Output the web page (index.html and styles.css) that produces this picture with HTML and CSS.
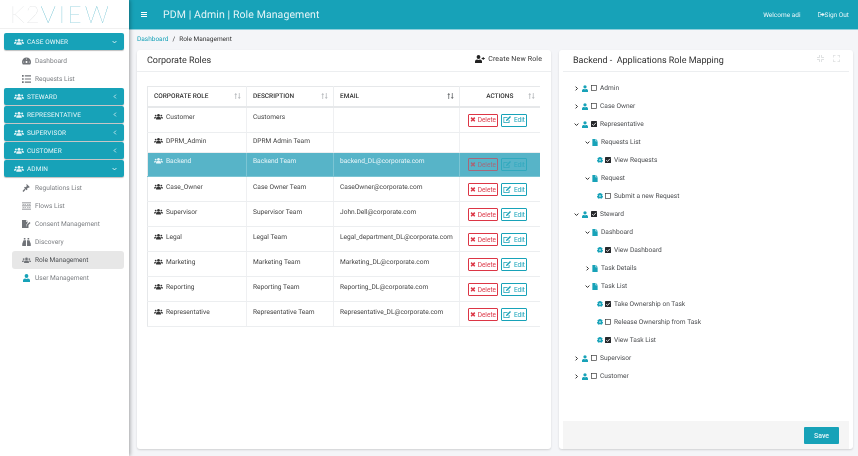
FILE: index.html
```html
<!DOCTYPE html>
<html lang="en">
<head>
    <meta charset="UTF-8">
    <meta name="viewport" content="width=device-width, initial-scale=1.0">
    <title>Role Management</title>
    <link rel="stylesheet" href="styles.css">
</head>
<body>
    <svg class="sprites" width="0" height="0">
        <symbol id="i-users" viewBox="0 0 24 16"><circle cx="12" cy="5" r="3.6"/><circle cx="4.5" cy="5.5" r="2.4"/><circle cx="19.5" cy="5.5" r="2.4"/><path d="M5.5 16v-2.5C5.500 10.500 8 9.500 12 9.500s6.500 1 6.500 4V16zM0 12.500C0 10 1.500 9 4 9c1 0 1.600.2 2.200.6C4.500 10.500 4 12 4 13.500H0zM24 12.500C24 10 22.500 9 20 9c-1 0-1.600.2-2.200.6 1.700.9 2.200 2.400 2.200 3.900h4z"/></symbol>
        <symbol id="i-user" viewBox="0 0 14 16"><circle cx="7" cy="4" r="3.800"/><path d="M0 16v-3c0-2.500 2-4 4-4 1 .6 2 .9 3 .9s2-.3 3-.9c2 0 4 1.500 4 4v3z"/></symbol>
        <symbol id="i-user-plus" viewBox="0 0 20 16"><circle cx="7" cy="4" r="3.800"/><path d="M0 16v-3c0-2.500 2-4 4-4 1 .6 2 .9 3 .9s2-.3 3-.9c2 0 4 1.500 4 4v3zM15.500 4h1.800v2.200h2.200V8h-2.200v2.200h-1.800V8h-2.200V6.200h2.200z"/></symbol>
        <symbol id="i-file" viewBox="0 0 12 16"><path d="M0 0h7v5h5v11H0zM8 0l4 4H8z"/></symbol>
        <symbol id="i-cog" viewBox="0 0 16 16"><path fill-rule="evenodd" d="M6 0h4l.5 2.200 2-1 2.600 3-1.500 1.700.6 2.100 1.800.5v3l-2 .6-.4 1.900-2.600 1.500-1.600-1.200H6.600L5 15.500 2.400 14l-.4-1.900-2-.6v-3l1.800-.5.6-2.100L.9 4.200l2.600-3 2 1zM8 5.800a2.200 2.200 0 1 0 0 4.400 2.200 2.200 0 0 0 0-4.400z"/></symbol>
        <symbol id="i-dash" viewBox="0 0 18 14"><path fill-rule="evenodd" d="M9 0a9 9 0 0 1 9 9c0 2-.6 3.700-1.600 5H1.600A9 9 0 0 1 0 9a9 9 0 0 1 9-9zM9 7a2 2 0 1 0 0 4 2 2 0 0 0 0-4zM3.500 8a1 1 0 1 0 0 2 1 1 0 0 0 0-2zM14.500 8a1 1 0 1 0 0 2 1 1 0 0 0 0-2zM9 2a1 1 0 1 0 0 2 1 1 0 0 0 0-2z"/></symbol>
        <symbol id="i-list" viewBox="0 0 16 14"><path d="M0 0h3v3H0zM0 5.500h3v3H0zM0 11h3v3H0zM5 .5h11v2H5zM5 6h11v2H5zM5 11.500h11v2H5z"/></symbol>
        <symbol id="i-gavel" viewBox="0 0 16 16"><path d="M8.500 0l6 6-2 2-1-1-2.500 2.500 1 1-2 2-5-5 2-2 1 1L9 4 7.500 2zM4 9.500l2 2L2 16l-2-2z"/></symbol>
        <symbol id="i-flows" viewBox="0 0 18 14"><path d="M0 0h18v1.500H0zM0 12.500h18V14H0zM1 3.500h3v1H1zM5 3.500h3v1H5zM10 3.500h3v1h-3zM14 3.500h3v1h-3zM0 6.200h18v1.200H0zM1 9.500h3v1H1zM5 9.500h3v1H5zM10 9.500h3v1h-3zM14 9.500h3v1h-3z"/></symbol>
        <symbol id="i-consent" viewBox="0 0 18 16"><path d="M0 0h8v4h3v2l-3 4v3l3-1 2-2v6H0zM9 0l3 3H9zM15 4l2 2-6 6-2.500.5L9 10z"/></symbol>
        <symbol id="i-binoculars" viewBox="0 0 16 15"><path d="M3 0h3v3H3zM10 0h3v3h-3zM2.500 4H7v11H0v-4zM9 4h4.500L16 11v4H9z"/></symbol>
        <symbol id="i-edit" viewBox="0 0 16 14"><path d="M1 2h8v1.400H2.400v9.200h9V8H13v6H1z"/><path d="M14 0l2 2-7.500 7.500L6 10l.5-2.500z"/></symbol>
        <symbol id="i-signout" viewBox="0 0 16 12"><path d="M6 0v1.500H1.500v9H6V12H0V0zM10 1.500L16 6l-6 4.500V8H5V4h5z"/></symbol>
        <symbol id="i-sort" viewBox="0 0 12 10"><path d="M3 0l2.500 3H3.700v7H2.300V3H.5zM9 10L6.500 7h1.800V0h1.400v7h1.800z"/></symbol>
        <symbol id="i-check" viewBox="0 0 10 10"><rect width="10" height="10" rx="1"/><path d="M2 5.200l2.200 2.200L8.200 3" fill="none" stroke="#fff" stroke-width="1.400"/></symbol>
        <symbol id="i-box" viewBox="0 0 10 10"><rect x=".6" y=".6" width="8.800" height="8.800" fill="#fff" stroke="#333" stroke-width="1.100"/></symbol>
        <symbol id="i-right" viewBox="0 0 6 8"><path d="M1.500 1l3 3-3 3" fill="none" stroke="currentColor" stroke-width="1.500"/></symbol>
        <symbol id="i-left" viewBox="0 0 6 8"><path d="M4.500 1l-3 3 3 3" fill="none" stroke="currentColor" stroke-width="1.300"/></symbol>
        <symbol id="i-down" viewBox="0 0 8 6"><path d="M1 1.500l3 3 3-3" fill="none" stroke="currentColor" stroke-width="1.500"/></symbol>
        <symbol id="i-compress" viewBox="0 0 14 14"><path d="M5 0v5H0M9 0v5h5M5 14V9H0M9 14V9h5" fill="none" stroke="currentColor" stroke-width="1.200"/></symbol>
        <symbol id="i-expand" viewBox="0 0 14 14"><path d="M.6 5V.6H5M9 .6h4.400V5M.6 9v4.400H5M9 13.400h4.400V9" fill="none" stroke="currentColor" stroke-width="1.200"/></symbol>
    </svg>

    <div class="app">
        <aside class="sidebar">
            <div class="logo"><span class="logo-k2">K2</span><span class="logo-view">VIEW</span></div>
            <nav class="menu">
                <a class="menu-head"><svg class="mi-users"><use href="#i-users"/></svg>CASE OWNER<svg class="mi-down"><use href="#i-down"/></svg></a>
                <ul class="sub">
                    <li><svg class="sub-icon"><use href="#i-dash"/></svg>Dashboard</li>
                    <li><svg class="sub-icon"><use href="#i-list"/></svg>Requests List</li>
                </ul>
                <a class="menu-head"><svg class="mi-users"><use href="#i-users"/></svg>STEWARD<svg class="mi-left"><use href="#i-left"/></svg></a>
                <a class="menu-head"><svg class="mi-users"><use href="#i-users"/></svg>REPRESENTATIVE<svg class="mi-left"><use href="#i-left"/></svg></a>
                <a class="menu-head"><svg class="mi-users"><use href="#i-users"/></svg>SUPERVISOR<svg class="mi-left"><use href="#i-left"/></svg></a>
                <a class="menu-head"><svg class="mi-users"><use href="#i-users"/></svg>CUSTOMER<svg class="mi-left"><use href="#i-left"/></svg></a>
                <a class="menu-head"><svg class="mi-users"><use href="#i-users"/></svg>ADMIN<svg class="mi-down"><use href="#i-down"/></svg></a>
                <ul class="sub">
                    <li><svg class="sub-icon"><use href="#i-gavel"/></svg>Regulations List</li>
                    <li><svg class="sub-icon"><use href="#i-flows"/></svg>Flows List</li>
                    <li><svg class="sub-icon"><use href="#i-consent"/></svg>Consent Management</li>
                    <li><svg class="sub-icon"><use href="#i-binoculars"/></svg>Discovery</li>
                    <li class="active"><svg class="sub-icon"><use href="#i-users"/></svg>Role Management</li>
                    <li><svg class="sub-icon teal"><use href="#i-user"/></svg>User Management</li>
                </ul>
            </nav>
        </aside>

        <div class="content">
            <header class="topbar">
                <span class="burger"><i></i><i></i><i></i></span>
                <span class="page-title">PDM | Admin | Role Management</span>
                <span class="welcome">Welcome adi</span>
                <span class="signout"><svg><use href="#i-signout"/></svg>Sign Out</span>
            </header>

            <div class="breadcrumb"><a>Dashboard</a><span class="sep">/</span>Role Management</div>

            <main class="panels">
                <section class="card roles">
                    <div class="card-head">
                        <h2>Corporate Roles</h2>
                        <span class="create"><svg><use href="#i-user-plus"/></svg>Create New Role</span>
                    </div>
                    <table class="grid">
                        <colgroup><col class="c1"><col class="c2"><col class="c3"><col class="c4"></colgroup>
                        <thead>
                            <tr>
                                <th>CORPORATE ROLE<svg class="sort"><use href="#i-sort"/></svg></th>
                                <th>DESCRIPTION<svg class="sort"><use href="#i-sort"/></svg></th>
                                <th>EMAIL<svg class="sort dark"><use href="#i-sort"/></svg></th>
                                <th class="center">ACTIONS<svg class="sort"><use href="#i-sort"/></svg></th>
                            </tr>
                        </thead>
                        <tbody>
                            <tr class="r26">
                                <td><svg class="role-icon"><use href="#i-users"/></svg>Customer</td>
                                <td>Customers</td>
                                <td></td>
                                <td class="acts"><button class="btn-del">✖ Delete</button><button class="btn-edit"><svg><use href="#i-edit"/></svg>Edit</button></td>
                            </tr>
                            <tr class="r20">
                                <td><svg class="role-icon"><use href="#i-users"/></svg>DPRM_Admin</td>
                                <td>DPRM Admin Team</td>
                                <td></td>
                                <td></td>
                            </tr>
                            <tr class="r24 selected">
                                <td><svg class="role-icon"><use href="#i-users"/></svg>Backend</td>
                                <td>Backend Team</td>
                                <td>backend_DL@corporate.com</td>
                                <td class="acts"><button class="btn-del">✖ Delete</button><button class="btn-edit"><svg><use href="#i-edit"/></svg>Edit</button></td>
                            </tr>
                            <tr>
                                <td><svg class="role-icon"><use href="#i-users"/></svg>Case_Owner</td>
                                <td>Case Owner Team</td>
                                <td>CaseOwner@corporate.com</td>
                                <td class="acts"><button class="btn-del">✖ Delete</button><button class="btn-edit"><svg><use href="#i-edit"/></svg>Edit</button></td>
                            </tr>
                            <tr>
                                <td><svg class="role-icon"><use href="#i-users"/></svg>Supervisor</td>
                                <td>Supervisor Team</td>
                                <td>John.Dell@corporate.com</td>
                                <td class="acts"><button class="btn-del">✖ Delete</button><button class="btn-edit"><svg><use href="#i-edit"/></svg>Edit</button></td>
                            </tr>
                            <tr>
                                <td><svg class="role-icon"><use href="#i-users"/></svg>Legal</td>
                                <td>Legal Team</td>
                                <td>Legal_department_DL@corporate.com</td>
                                <td class="acts"><button class="btn-del">✖ Delete</button><button class="btn-edit"><svg><use href="#i-edit"/></svg>Edit</button></td>
                            </tr>
                            <tr>
                                <td><svg class="role-icon"><use href="#i-users"/></svg>Marketing</td>
                                <td>Marketing Team</td>
                                <td>Marketing_DL@corporate.com</td>
                                <td class="acts"><button class="btn-del">✖ Delete</button><button class="btn-edit"><svg><use href="#i-edit"/></svg>Edit</button></td>
                            </tr>
                            <tr>
                                <td><svg class="role-icon"><use href="#i-users"/></svg>Reporting</td>
                                <td>Reporting Team</td>
                                <td>Reporting_DL@corporate.com</td>
                                <td class="acts"><button class="btn-del">✖ Delete</button><button class="btn-edit"><svg><use href="#i-edit"/></svg>Edit</button></td>
                            </tr>
                            <tr>
                                <td><svg class="role-icon"><use href="#i-users"/></svg>Representative</td>
                                <td>Representative Team</td>
                                <td>Representative_DL@corporate.com</td>
                                <td class="acts"><button class="btn-del">✖ Delete</button><button class="btn-edit"><svg><use href="#i-edit"/></svg>Edit</button></td>
                            </tr>
                        </tbody>
                    </table>
                </section>

                <section class="card mapping">
                    <div class="card-head map-head">
                        <h2>Backend -&nbsp; Applications Role Mapping</h2>
                        <span class="tools"><svg><use href="#i-compress"/></svg><svg><use href="#i-expand"/></svg></span>
                    </div>
                    <ul class="tree">
                        <li class="l1"><svg class="tw"><use href="#i-right"/></svg><svg class="ti"><use href="#i-user"/></svg><svg class="cb"><use href="#i-box"/></svg>Admin</li>
                        <li class="l1"><svg class="tw"><use href="#i-right"/></svg><svg class="ti"><use href="#i-user"/></svg><svg class="cb"><use href="#i-box"/></svg>Case Owner</li>
                        <li class="l1"><svg class="tw"><use href="#i-down"/></svg><svg class="ti"><use href="#i-user"/></svg><svg class="cb"><use href="#i-check"/></svg>Representative</li>
                        <li class="l2"><svg class="tw"><use href="#i-down"/></svg><svg class="tf"><use href="#i-file"/></svg>Requests List</li>
                        <li class="l3"><svg class="tc"><use href="#i-cog"/></svg><svg class="cb"><use href="#i-check"/></svg>View Requests</li>
                        <li class="l2"><svg class="tw"><use href="#i-down"/></svg><svg class="tf"><use href="#i-file"/></svg>Request</li>
                        <li class="l3"><svg class="tc"><use href="#i-cog"/></svg><svg class="cb"><use href="#i-box"/></svg>Submit a new Request</li>
                        <li class="l1"><svg class="tw"><use href="#i-down"/></svg><svg class="ti"><use href="#i-user"/></svg><svg class="cb"><use href="#i-check"/></svg>Steward</li>
                        <li class="l2"><svg class="tw"><use href="#i-down"/></svg><svg class="tf"><use href="#i-file"/></svg>Dashboard</li>
                        <li class="l3"><svg class="tc"><use href="#i-cog"/></svg><svg class="cb"><use href="#i-check"/></svg>View Dashboard</li>
                        <li class="l2"><svg class="tw"><use href="#i-right"/></svg><svg class="tf"><use href="#i-file"/></svg>Task Details</li>
                        <li class="l2"><svg class="tw"><use href="#i-down"/></svg><svg class="tf"><use href="#i-file"/></svg>Task List</li>
                        <li class="l3"><svg class="tc"><use href="#i-cog"/></svg><svg class="cb"><use href="#i-check"/></svg>Take Ownership on Task</li>
                        <li class="l3"><svg class="tc"><use href="#i-cog"/></svg><svg class="cb"><use href="#i-box"/></svg>Release Ownership from Task</li>
                        <li class="l3"><svg class="tc"><use href="#i-cog"/></svg><svg class="cb"><use href="#i-check"/></svg>View Task List</li>
                        <li class="l1"><svg class="tw"><use href="#i-right"/></svg><svg class="ti"><use href="#i-user"/></svg><svg class="cb"><use href="#i-box"/></svg>Supervisor</li>
                        <li class="l1"><svg class="tw"><use href="#i-right"/></svg><svg class="ti"><use href="#i-user"/></svg><svg class="cb"><use href="#i-box"/></svg>Customer</li>
                    </ul>
                    <div class="card-foot"><button class="btn-save">Save</button></div>
                </section>
            </main>
        </div>
    </div>
</body>
</html>
```

FILE: styles.css
```css
* {
    box-sizing: border-box;
}

html, body {
    height: 100%;
}

body {
    margin: 0;
    font-family: Roboto, "Liberation Sans", sans-serif;
    font-size: 6.6px;
    color: #333;
    background-color: #f4f5f8;
    overflow: hidden;
    text-rendering: geometricPrecision;
}

.sprites {
    display: block;
    height: 0;
}

ul {
    list-style: none;
    margin: 0;
    padding: 0;
}

svg {
    fill: currentColor;
    flex: none;
}

.app {
    display: flex;
    height: 456px;
    will-change: transform;
}

/* sidebar */
.sidebar {
    width: 129px;
    flex: none;
    background-color: #fff;
    box-shadow: 1px 0 4px rgba(0, 0, 0, 0.35);
    z-index: 2;
}

.logo {
    height: 29px;
    padding: 1px 0 0 10px;
    font-family: Lato, sans-serif;
    font-weight: 100;
    font-size: 24px;
    line-height: 27px;
    letter-spacing: 1px;
    border-bottom: 1px solid #f0f0f0;
}

.logo-k2 {
    color: #d4d6d8;
}

.logo-view {
    color: #4fb4c8;
    letter-spacing: 3px;
}

.menu {
    padding: 4px 5px 0 4px;
}

.menu-head {
    display: flex;
    align-items: center;
    height: 17px;
    margin-bottom: 1px;
    padding: 0 7px 0 10px;
    color: #e6f5f8;
    font-weight: 400;
    font-size: 6.5px;
    letter-spacing: 0.1px;
    background-color: #17a2b8;
    border-radius: 2px;
    box-shadow: 0 1px 1px rgba(0, 0, 0, 0.25);
}

.mi-users {
    width: 10px;
    height: 7px;
    margin-right: 3px;
}

.mi-down {
    width: 5px;
    height: 4px;
    margin-left: auto;
}

.mi-left {
    width: 4px;
    height: 5px;
    margin-left: auto;
}

.sub {
    padding: 1px 0 0 8px;
}

.sub li {
    display: flex;
    align-items: center;
    height: 18px;
    padding-left: 10px;
    color: #7c7f83;
}

.sub li.active {
    color: #4a4d50;
    background-color: #e7e7e7;
    border-radius: 3px;
}

.sub-icon {
    width: 9px;
    height: 8px;
    margin-right: 4px;
    color: #707378;
}

.sub-icon.teal {
    color: #17a2b8;
}

/* top bar */
.content {
    flex: 1;
    min-width: 0;
    display: flex;
    flex-direction: column;
}

.topbar {
    display: flex;
    align-items: center;
    height: 30px;
    flex: none;
    padding: 0 9px 0 12px;
    color: #e4f4f7;
    background-color: #17a2b8;
    border-bottom: 1px solid #8fd0dc;
}

.burger {
    display: flex;
    flex-direction: column;
    gap: 1px;
    width: 6px;
    margin-right: 16px;
}

.burger i {
    display: block;
    height: 1px;
    background-color: #fff;
}

.page-title {
    font-size: 10.5px;
    letter-spacing: 0.1px;
}

.welcome {
    margin-left: auto;
    font-size: 6.5px;
}

.signout {
    display: flex;
    align-items: center;
    margin-left: 17px;
    font-size: 6.5px;
}

.signout svg {
    width: 7px;
    height: 5px;
}

.breadcrumb {
    height: 20px;
    flex: none;
    padding: 5px 0 0 8px;
    font-size: 6.5px;
    line-height: 8px;
    color: #333;
}

.breadcrumb a {
    color: #17a2b8;
}

.sep {
    margin: 0 4px;
}

/* cards */
.panels {
    display: flex;
    gap: 8px;
    padding: 0 5px 7px 8px;
    flex: 1;
    min-height: 0;
}

.card {
    display: flex;
    flex-direction: column;
    background-color: #fff;
    border-radius: 3px;
    box-shadow: 0 1px 2px rgba(0, 0, 0, 0.15);
}

.roles {
    width: 414px;
}

.mapping {
    flex: 1;
    min-width: 0;
}

.card-head {
    display: flex;
    justify-content: space-between;
    height: 22px;
    padding: 0 9px 0 10px;
    border-bottom: 1px solid #eceef0;
}

.card-head h2 {
    margin: 0;
    font-size: 9px;
    font-weight: 400;
    line-height: 22px;
    color: #333;
}

.create {
    display: flex;
    align-items: center;
    height: 18px;
    font-size: 7px;
    letter-spacing: 0.15px;
}

.create svg {
    width: 10px;
    height: 8px;
    margin-right: 3px;
    color: #222;
}

.map-head {
    margin: 0 4px;
    padding: 0 0 0 10px;
}

.tools {
    display: flex;
    gap: 9px;
    padding: 5px 9px 0 0;
    color: #c9ccce;
}

.tools svg {
    width: 7px;
    height: 7px;
}

/* table */
.grid {
    width: 392px;
    margin: 14px 0 0 10px;
    border-collapse: collapse;
    table-layout: fixed;
    border-top: 1px solid #e6e8ea;
    border-left: 1px solid #e6e8ea;
}

.c1 { width: 99px; }
.c2 { width: 87px; }
.c3 { width: 126px; }
.c4 { width: 80px; }

.grid th {
    position: relative;
    height: 20px;
    padding: 0 6px;
    text-align: left;
    font-size: 6.5px;
    font-weight: 500;
    color: #333;
    border-right: 1px solid #eceef0;
    border-bottom: 2px solid #e6e8ea;
}

.grid th:last-child,
.grid td:last-child {
    border-right: 0;
}

.grid th.center {
    text-align: center;
}

.sort {
    position: absolute;
    right: 5px;
    top: 6px;
    width: 7px;
    height: 6px;
    color: #b9bcbf;
}

.sort.dark {
    color: #6a6d70;
}

.grid tbody tr {
    height: 25px;
}

.grid tbody tr.r26 {
    height: 26px;
}

.grid tbody tr.r20 {
    height: 20px;
}

.grid tbody tr.r24 {
    height: 24px;
}

.grid td {
    padding: 6px 0 0 6px;
    vertical-align: top;
    line-height: 9px;
    color: #444;
    border-right: 1px solid #eff0f2;
    border-bottom: 1px solid #eceef0;
}

.grid .r26 td {
    padding-top: 5px;
}

.grid .r20 td,
.grid .r24 td {
    padding-top: 4px;
}

.role-icon {
    width: 9px;
    height: 7px;
    margin-right: 3px;
    color: #333;
    vertical-align: -1px;
}

.grid tr.selected td {
    color: #e9f6f9;
    background-color: #57b4c8;
    border-color: #7cc5d4;
}

.selected .role-icon {
    color: #e9f6f9;
}

.grid td.acts {
    padding: 6px 0 0 8px;
    white-space: nowrap;
}

.grid .selected td.acts {
    padding-top: 5px;
}

.acts button {
    height: 13px;
    padding: 0;
    font-family: inherit;
    font-size: 6.5px;
    background-color: #fff;
    border-radius: 1px;
    vertical-align: top;
}

.selected .acts button {
    background-color: transparent;
    opacity: 0.6;
}

.btn-del {
    width: 30px;
    color: #dc3545;
    border: 1px solid #dc3545;
    margin-right: 3px;
}

.btn-edit {
    width: 26px;
    color: #17a2b8;
    border: 1px solid #17a2b8;
}

.btn-edit svg {
    width: 8px;
    height: 7px;
    margin-right: 3px;
    vertical-align: -1px;
}

/* tree */
.tree {
    flex: 1;
    padding-top: 7px;
}

.tree li {
    display: flex;
    align-items: center;
    height: 18px;
    color: #4a4c4f;
}

.tree .l1 {
    padding-left: 15px;
}

.tree .l2 {
    padding-left: 26px;
}

.tree .l3 {
    padding-left: 38px;
}

.tw {
    width: 5px;
    height: 5px;
    margin-right: 3px;
    color: #222;
}

.tree .l2 .tw {
    margin-right: 2px;
}

.ti {
    width: 6px;
    height: 7px;
    margin-right: 3px;
    color: #17a2b8;
}

.tf {
    width: 6px;
    height: 7px;
    margin-right: 3px;
    color: #17a2b8;
}

.tc {
    width: 6px;
    height: 6px;
    margin-right: 2px;
    color: #17a2b8;
}

.cb {
    width: 6px;
    height: 6px;
    margin-right: 3px;
    color: #26282b;
}

.card-foot {
    display: flex;
    justify-content: flex-end;
    height: 28px;
    margin: 0 4px;
    padding: 6px 10px 0 0;
    background-color: #f5f5f5;
}

.btn-save {
    width: 35px;
    height: 17px;
    padding: 0;
    font-family: inherit;
    font-size: 7px;
    font-weight: 500;
    color: #e9f6f9;
    background-color: #17a2b8;
    border: 0;
    border-radius: 1px;
}
```
